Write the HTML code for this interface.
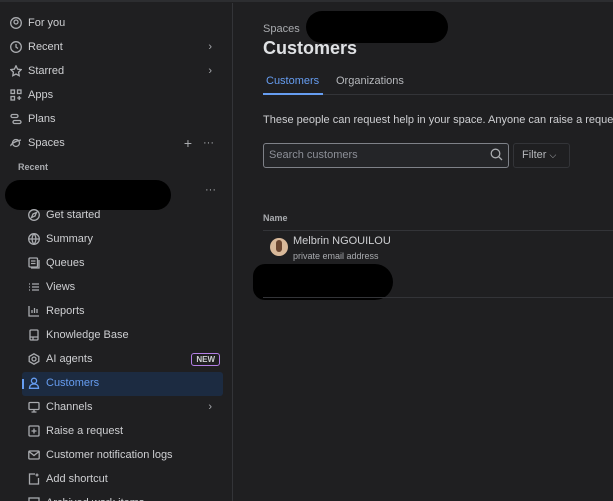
<!DOCTYPE html><html style="width:613px;height:501px;overflow:hidden"><head><style>
*{margin:0;padding:0;box-sizing:border-box}
body{width:613px;height:501px;overflow:hidden;background:#1f1f21;font-family:"Liberation Sans",sans-serif;font-size:11px;color:#cecfd2;position:relative}
.top{position:absolute;left:0;top:0;width:613px;height:2px;background:#2c2d30}
.side{position:absolute;left:0;top:3px;width:233px;height:498px;border-right:1px solid #333438;overflow:hidden}
.it{position:absolute;height:24px;line-height:24px;left:0;width:230px}
.it svg{position:absolute;top:6px;width:12px;height:12px;fill:none;stroke:#a9abaf;stroke-width:1.3}
.it span{position:absolute}
.chev{position:absolute;right:18px;color:#a9abaf;font-size:11px}
.blob{position:absolute;background:#000;border-radius:20px}
</style></head><body>
<div class="top"></div>
<div class="side">
<div class="it" style="top:8px"><svg style="left:10px" viewBox="0 0 12 12"><circle cx="6" cy="6" r="5.3"/><circle cx="6" cy="5" r="2"/></svg><span style="left:28px">For you</span></div>
<div class="it" style="top:32px"><svg style="left:10px" viewBox="0 0 12 12"><circle cx="6" cy="6" r="5.3"/><path d="M6 3v3l2 1.5"/></svg><span style="left:28px">Recent</span><span class="chev">›</span></div>
<div class="it" style="top:56px"><svg style="left:10px" viewBox="0 0 12 12"><path d="M6 .8l1.6 3.3 3.6.5-2.6 2.5.6 3.6L6 9 2.8 10.7l.6-3.6L.8 4.6l3.6-.5z"/></svg><span style="left:28px">Starred</span><span class="chev">›</span></div>
<div class="it" style="top:80px"><svg style="left:10px" viewBox="0 0 12 12"><rect x="1" y="1" width="3.5" height="3.5"/><rect x="7.5" y="1" width="3.5" height="3.5"/><rect x="1" y="7.5" width="3.5" height="3.5"/><path d="M9.2 7v4M7.2 9h4"/></svg><span style="left:28px">Apps</span></div>
<div class="it" style="top:104px"><svg style="left:10px" viewBox="0 0 12 12"><rect x="1" y="1.5" width="7" height="3" rx="1.5"/><rect x="3" y="7.5" width="8" height="3" rx="1.5"/></svg><span style="left:28px">Plans</span></div>
<div class="it" style="top:128px"><svg style="left:10px" viewBox="0 0 12 12"><circle cx="6" cy="6" r="3.5"/><path d="M1 9c-1-1.5 4-5 10-6"/></svg><span style="left:28px">Spaces</span><span style="right:38px;font-size:14px;color:#a9abaf">+</span><span style="right:16px;color:#a9abaf">···</span></div>
<div style="position:absolute;left:18px;top:159px;font-size:9px;font-weight:bold;color:#a9abaf">Recent</div>
<div class="blob" style="left:5px;top:177px;width:166px;height:30px"></div>
<span style="position:absolute;right:16px;top:181px;color:#a9abaf">···</span>
<div class="it" style="top:200px"><svg style="left:28px" viewBox="0 0 12 12"><circle cx="6" cy="6" r="5.3"/><path d="M8.5 3.5 5 5 3.5 8.5 7 7z"/></svg><span style="left:46px">Get started</span></div>
<div class="it" style="top:224px"><svg style="left:28px" viewBox="0 0 12 12"><circle cx="6" cy="6" r="5.3"/><path d="M.7 6h10.6M6 .7c-2.5 3-2.5 7.6 0 10.6M6 .7c2.5 3 2.5 7.6 0 10.6"/></svg><span style="left:46px">Summary</span></div>
<div class="it" style="top:248px"><svg style="left:28px" viewBox="0 0 12 12"><rect x="1" y="1" width="8.5" height="9" rx="1"/><path d="M3 4h4.5M3 6.5h4.5M11 3v8H3"/></svg><span style="left:46px">Queues</span></div>
<div class="it" style="top:272px"><svg style="left:28px" viewBox="0 0 12 12"><path d="M1 3h1M4 3h7M1 6h1M4 6h7M1 9h1M4 9h7"/></svg><span style="left:46px">Views</span></div>
<div class="it" style="top:296px"><svg style="left:28px" viewBox="0 0 12 12"><path d="M1 1v10h10M4 8V5M6.5 8V3M9 8V4"/></svg><span style="left:46px">Reports</span></div>
<div class="it" style="top:320px"><svg style="left:28px" viewBox="0 0 12 12"><rect x="2" y="1" width="8" height="10" rx="1"/><path d="M2 8h8M5 8v3"/></svg><span style="left:46px">Knowledge Base</span></div>
<div class="it" style="top:344px"><svg style="left:28px" viewBox="0 0 12 12"><path d="M6 .8 10.8 3.5v5L6 11.2 1.2 8.5v-5z"/><circle cx="6" cy="6" r="2"/></svg><span style="left:46px">AI agents</span><span style="right:10px;top:6px;height:13px;line-height:11px;font-size:8px;font-weight:bold;border:1px solid #b37fe6;border-radius:3px;padding:0 4px;color:#cecfd2">NEW</span></div>
<div style="position:absolute;left:22px;top:369px;width:201px;height:24px;background:#1c2b41;border-radius:3px"></div>
<div style="position:absolute;left:22px;top:376px;width:2px;height:10px;background:#669df1"></div>
<div class="it" style="top:368px;color:#669df1"><svg style="left:28px;stroke:#669df1" viewBox="0 0 12 12"><circle cx="6" cy="3.8" r="2.6"/><path d="M1.5 11.3c0-3 2-4.3 4.5-4.3s4.5 1.3 4.5 4.3z"/></svg><span style="left:46px">Customers</span></div>
<div class="it" style="top:392px"><svg style="left:28px" viewBox="0 0 12 12"><rect x="1" y="1.5" width="10" height="7" rx="1"/><path d="M6 8.5v2.5M3.5 11h5"/></svg><span style="left:46px">Channels</span><span class="chev">›</span></div>
<div class="it" style="top:416px"><svg style="left:28px" viewBox="0 0 12 12"><rect x="1" y="1" width="10" height="10" rx="1"/><path d="M6 3.5v5M3.5 6h5"/></svg><span style="left:46px">Raise a request</span></div>
<div class="it" style="top:440px"><svg style="left:28px" viewBox="0 0 12 12"><rect x=".8" y="2" width="10.4" height="8" rx="1"/><path d="M1 2.5 6 6.5l5-4"/></svg><span style="left:46px">Customer notification logs</span></div>
<div class="it" style="top:464px"><svg style="left:28px" viewBox="0 0 12 12"><path d="M7 1H1.5v10h9V5M9 .5v3M7.5 2h3"/></svg><span style="left:46px">Add shortcut</span></div>
<div class="it" style="top:488px"><svg style="left:28px" viewBox="0 0 12 12"><rect x="1" y="1" width="10" height="10"/></svg><span style="left:46px">Archived work items</span></div>
</div>
<div style="position:absolute;left:263px;top:23px;font-size:11px;color:#a9abaf">Spaces</div>
<div class="blob" style="left:306px;top:11px;width:142px;height:32px"></div>
<div style="position:absolute;left:263px;top:38px;font-size:18px;font-weight:bold;color:#dfe1e4">Customers</div>
<div style="position:absolute;left:263px;top:94px;width:350px;height:1px;background:#333438"></div>
<div style="position:absolute;left:266px;top:75px;color:#669df1">Customers</div>
<div style="position:absolute;left:263px;top:93px;width:60px;height:2px;background:#669df1"></div>
<div style="position:absolute;left:336px;top:75px;color:#b6b8bc">Organizations</div>
<div style="position:absolute;left:263px;top:114px;white-space:nowrap">These people can request help in your space. Anyone can raise a request</div>
<div style="position:absolute;left:263px;top:143px;width:246px;height:25px;border:1px solid #7e8188;border-radius:3px;background:#242528"></div>
<div style="position:absolute;left:269px;top:149px;color:#8c8f97">Search customers</div>
<svg style="position:absolute;left:490px;top:148px" width="13" height="13" viewBox="0 0 13 13" fill="none" stroke="#a9abaf" stroke-width="1.3"><circle cx="5.5" cy="5.5" r="4.3"/><path d="M8.7 8.7 12 12"/></svg>
<div style="position:absolute;left:513px;top:143px;width:57px;height:25px;border:1px solid #333438;border-radius:3px"></div>
<div style="position:absolute;left:522px;top:149px;color:#b6b8bc">Filter <span style="font-size:9px">⌵</span></div>
<div style="position:absolute;left:263px;top:213px;font-size:9px;font-weight:bold;color:#a9abaf">Name</div>
<div style="position:absolute;left:263px;top:230px;width:350px;height:1px;background:#333438"></div>
<div style="position:absolute;left:270px;top:238px;width:18px;height:18px;border-radius:50%;background:#d9b99a"></div>
<div style="position:absolute;left:276px;top:240px;width:6px;height:12px;border-radius:3px;background:#6b4630"></div>
<div style="position:absolute;left:293px;top:235px">Melbrin NGOUILOU</div>
<div style="position:absolute;left:293px;top:251px;font-size:9px;color:#a9abaf">private email address</div>
<div class="blob" style="left:253px;top:264px;width:140px;height:36px;border-radius:20px 30px 30px 20px"></div>
<div style="position:absolute;left:263px;top:297px;width:350px;height:1px;background:#333438"></div>
</body></html>
